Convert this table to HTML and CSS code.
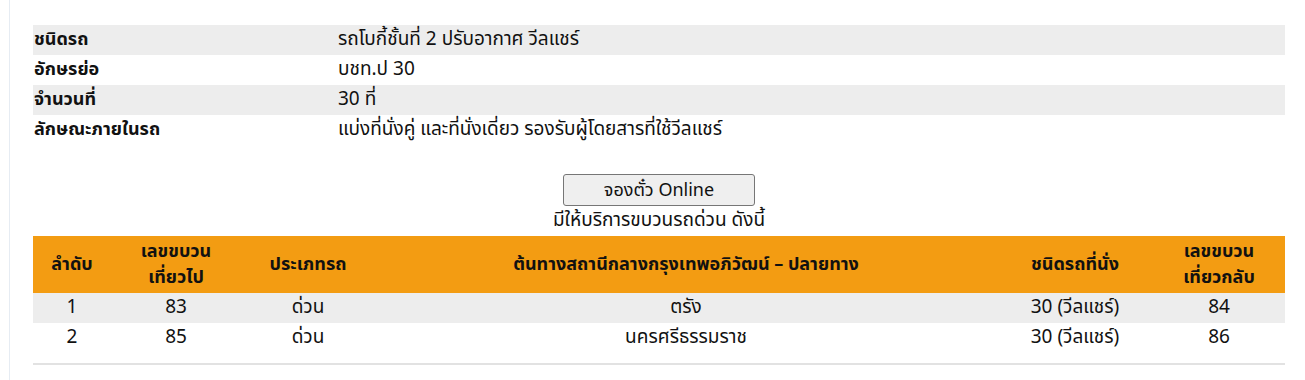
FILE: index.html
```html
<!DOCTYPE html>
<html lang="th">
<head>
<meta charset="utf-8">
<title>ขบวนรถ</title>
<link rel="stylesheet" href="styles.css">
</head>
<body>
<div class="page">
  <table class="info">
    <tr class="alt"><th>ชนิดรถ</th><td>รถโบกี้ชั้นที่ 2 ปรับอากาศ วีลแชร์</td></tr>
    <tr><th>อักษรย่อ</th><td>บชท.ป 30</td></tr>
    <tr class="alt"><th>จำนวนที่</th><td>30 ที่</td></tr>
    <tr><th>ลักษณะภายในรถ</th><td>แบ่งที่นั่งคู่ และที่นั่งเดี่ยว รองรับผู้โดยสารที่ใช้วีลแชร์</td></tr>
  </table>
  <div class="actions">
    <button class="book" type="button">จองตั๋ว Online</button>
    <p class="caption">มีให้บริการขบวนรถด่วน ดังนี้</p>
  </div>
  <div class="trains-wrap">
    <table class="trains">
      <thead>
        <tr>
          <th class="c1">ลำดับ</th>
          <th class="c2">เลขขบวน<br>เที่ยวไป</th>
          <th class="c3">ประเภทรถ</th>
          <th class="c4">ต้นทางสถานีกลางกรุงเทพอภิวัฒน์ – ปลายทาง</th>
          <th class="c5">ชนิดรถที่นั่ง</th>
          <th class="c6">เลขขบวน<br>เที่ยวกลับ</th>
        </tr>
      </thead>
      <tbody>
        <tr class="alt"><td>1</td><td>83</td><td>ด่วน</td><td>ตรัง</td><td>30 (วีลแชร์)</td><td>84</td></tr>
        <tr><td>2</td><td>85</td><td>ด่วน</td><td>นครศรีธรรมราช</td><td>30 (วีลแชร์)</td><td>86</td></tr>
      </tbody>
    </table>
  </div>
</div>
</body>
</html>
```

FILE: styles.css
```css
html, body {
  margin: 0;
  padding: 0;
  background: #ffffff;
}

body {
  font-family: "Noto Sans Thai", "Noto Sans", "DejaVu Sans", sans-serif;
  font-size: 19px;
  color: #111111;
}

.page {
  margin-left: 9px;
  border-left: 1px solid #e6ecf3;
  padding: 25px 20px 15px 23px;
  min-height: 340px;
}

table {
  border-collapse: collapse;
  width: 1252px;
}

.info th,
.info td {
  height: 30px;
  padding: 0;
  text-align: left;
  vertical-align: middle;
  line-height: 20px;
}

.info th {
  width: 304px;
  padding-left: 1px;
  font-size: 18px;
  font-weight: bold;
}

.info tr.alt {
  background: #ededed;
}

.actions {
  display: flex;
  flex-direction: column;
  align-items: center;
  padding-top: 29px;
}

.book {
  width: 192px;
  height: 32px;
  font-family: inherit;
  font-size: 18px;
  color: #111;
  background: #efefef;
  border: 1px solid #767676;
  border-radius: 3px;
  padding: 0;
}

.caption {
  margin: 3px 0 0;
  height: 27px;
  line-height: 24px;
}

.trains-wrap {
  width: 1252px;
  border-bottom: 2px solid #e2e2e2;
  padding-bottom: 10px;
}

.trains th {
  background: #f39c12;
  height: 57px;
  padding: 0;
  font-size: 18px;
  font-weight: bold;
  line-height: 26px;
  text-align: center;
  vertical-align: middle;
}

.trains td {
  height: 30px;
  padding: 0;
  text-align: center;
  vertical-align: middle;
  line-height: 20px;
}

.trains tr.alt {
  background: #ededed;
}

.c1 { width: 78px; }
.c2 { width: 130px; }
.c3 { width: 134px; }
.c4 { width: 622px; }
.c5 { width: 156px; }
.c6 { width: 132px; }
```
